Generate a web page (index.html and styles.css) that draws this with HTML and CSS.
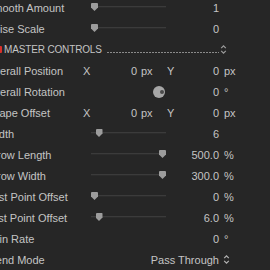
FILE: index.html
```html
<!DOCTYPE html>
<html>
<head>
<meta charset="utf-8">
<link rel="stylesheet" href="styles.css">
</head>
<body>
<div class="panel">
  <div class="row">
    <span class="label">Smooth Amount</span>
    <div class="slider"><span class="track"></span><span class="thumb" style="left:0%"></span></div>
    <span class="num">1</span><span class="unit"></span>
  </div>
  <div class="row">
    <span class="label">Noise Scale</span>
    <div class="slider"><span class="track"></span><span class="thumb" style="left:0%"></span></div>
    <span class="num">0</span><span class="unit"></span>
  </div>
  <div class="row header">
    <span class="check"></span>
    <span class="htitle">MASTER CONTROLS</span>
    <span class="leader"></span>
    <svg class="chev" width="7" height="11" viewBox="0 0 7 11"><path d="M1.2 4.2 L3.5 1.8 L5.8 4.2 M1.2 6.8 L3.5 9.2 L5.8 6.8" fill="none" stroke="#9c9c9c" stroke-width="1.2"/></svg>
  </div>
  <div class="row xy">
    <span class="label">Overall Position</span>
    <span class="axis">X</span><span class="num">0</span><span class="unit">px</span>
    <span class="axis">Y</span><span class="num">0</span><span class="unit">px</span>
  </div>
  <div class="row">
    <span class="label">Overall Rotation</span>
    <div class="dialcell"><span class="dial"></span></div>
    <span class="num">0</span><span class="unit deg">°</span>
  </div>
  <div class="row xy">
    <span class="label">Shape Offset</span>
    <span class="axis">X</span><span class="num">0</span><span class="unit">px</span>
    <span class="axis">Y</span><span class="num">0</span><span class="unit">px</span>
  </div>
  <div class="row">
    <span class="label">Width</span>
    <div class="slider"><span class="track"></span><span class="thumb" style="left:6%"></span></div>
    <span class="num">6</span><span class="unit"></span>
  </div>
  <div class="row">
    <span class="label">Arrow Length</span>
    <div class="slider"><span class="track"></span><span class="thumb" style="left:100%"></span></div>
    <span class="num">500.0</span><span class="unit">%</span>
  </div>
  <div class="row">
    <span class="label">Arrow Width</span>
    <div class="slider"><span class="track"></span><span class="thumb" style="left:100%"></span></div>
    <span class="num">300.0</span><span class="unit">%</span>
  </div>
  <div class="row">
    <span class="label">First Point Offset</span>
    <div class="slider"><span class="track"></span><span class="thumb" style="left:0%"></span></div>
    <span class="num">0</span><span class="unit">%</span>
  </div>
  <div class="row">
    <span class="label">Last Point Offset</span>
    <div class="slider"><span class="track"></span><span class="thumb" style="left:6%"></span></div>
    <span class="num">6.0</span><span class="unit">%</span>
  </div>
  <div class="row">
    <span class="label">Spin Rate</span>
    <span class="blank"></span>
    <span class="num">0</span><span class="unit deg">°</span>
  </div>
  <div class="row">
    <span class="label">Blend Mode</span>
    <span class="popup">Pass Through</span>
    <span class="unit"><svg class="chev" width="7" height="11" viewBox="0 0 7 11"><path d="M1.2 4.2 L3.5 1.8 L5.8 4.2 M1.2 6.8 L3.5 9.2 L5.8 6.8" fill="none" stroke="#b4b4b4" stroke-width="1.2"/></svg></span>
  </div>
</div>
</body>
</html>
```
FILE: styles.css
```css
html, body {
  margin: 0;
  padding: 0;
}
body {
  width: 270px;
  height: 270px;
  overflow: hidden;
  background: #262626;
  font-family: "Liberation Sans", Arial, sans-serif;
  font-size: 11px;
  color: #c4c4c4;
}
.panel {
  display: flex;
  flex-direction: column;
  margin: -3px 0 0 -14px;
}
.row {
  display: grid;
  grid-template-columns: 105px 75px 53px auto;
  height: 21px;
  align-items: center;
  white-space: nowrap;
}
.label {
  white-space: nowrap;
}
.num {
  text-align: right;
}
.unit {
  padding-left: 5px;
  display: flex;
  align-items: center;
}
.deg {
  align-self: center;
}
.slider {
  position: relative;
  height: 21px;
}
.track {
  position: absolute;
  left: 0;
  right: 0;
  top: 9px;
  height: 1px;
  background: #3b3b3b;
  border-bottom: 1px solid #2c2c2c;
}
.thumb {
  position: absolute;
  top: 6px;
  width: 7px;
  height: 8px;
  margin-left: 0;
  transform: translateX(calc(-1px * 0));
  background: #9c9c9c;
  border-radius: 1px 1px 0 0;
  clip-path: polygon(0 0, 100% 0, 100% 55%, 50% 100%, 0 55%);
}
.slider .thumb[style*="100%"] {
  transform: translateX(-100%);
}
.xy {
  grid-template-columns: 97px 8px 46px 30px 8px 44px auto;
}
.xy .unit {
  padding-left: 4px;
}
.xy .unit:last-child {
  padding-left: 5px;
}
.axis {
  text-align: left;
}
.dialcell {
  display: flex;
  justify-content: flex-end;
  padding-right: 1px;
}
.dial {
  position: relative;
  width: 12px;
  height: 12px;
  border-radius: 50%;
  background: #a6a6a6;
}
.dial::after {
  content: "";
  position: absolute;
  right: 1px;
  top: 4px;
  width: 4px;
  height: 4px;
  border-radius: 50%;
  background: #4a4a4a;
}
.popup {
  grid-column: 2 / span 2;
  text-align: right;
}
.header {
  display: flex;
  align-items: center;
}
.check {
  width: 7px;
  height: 7px;
  margin-left: 9px;
  background: #d9302a;
  border-radius: 1px;
}
.htitle {
  margin-left: 2px;
  font-size: 10px;
  letter-spacing: -0.15px;
}
.leader {
  margin-left: 5px;
  width: 112px;
  height: 1px;
  margin-top: 6px;
  background: repeating-linear-gradient(90deg, #8a8a8a 0 2px, transparent 2px 3px);
}
.chev {
  display: block;
  margin-left: 1px;
}
.unit .chev {
  margin-left: -1px;
}
```
